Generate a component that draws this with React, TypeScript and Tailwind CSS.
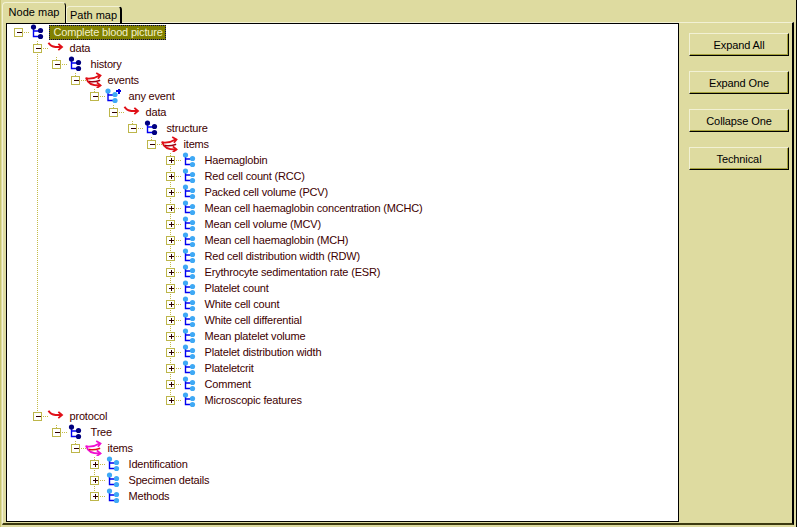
import React from 'react';

type Kind = 'structure' | 'structureLight' | 'event' | 'single' | 'multiple' | 'multiplePink';

type TreeNode = {
  label: string;
  kind: Kind;
  open?: boolean;
  selected?: boolean;
  children?: TreeNode[];
};

const leaf = (label: string): TreeNode => ({ label, kind: 'structureLight' });

const tree: TreeNode = {
  label: 'Complete blood picture',
  kind: 'structure',
  open: true,
  selected: true,
  children: [
    {
      label: 'data',
      kind: 'single',
      open: true,
      children: [
        {
          label: 'history',
          kind: 'structure',
          open: true,
          children: [
            {
              label: 'events',
              kind: 'multiple',
              open: true,
              children: [
                {
                  label: 'any event',
                  kind: 'event',
                  open: true,
                  children: [
                    {
                      label: 'data',
                      kind: 'single',
                      open: true,
                      children: [
                        {
                          label: 'structure',
                          kind: 'structure',
                          open: true,
                          children: [
                            {
                              label: 'items',
                              kind: 'multiple',
                              open: true,
                              children: [
                                leaf('Haemaglobin'),
                                leaf('Red cell count (RCC)'),
                                leaf('Packed cell volume (PCV)'),
                                leaf('Mean cell haemaglobin concentration (MCHC)'),
                                leaf('Mean cell volume (MCV)'),
                                leaf('Mean cell haemaglobin (MCH)'),
                                leaf('Red cell distribution width (RDW)'),
                                leaf('Erythrocyte sedimentation rate (ESR)'),
                                leaf('Platelet count'),
                                leaf('White cell count'),
                                leaf('White cell differential'),
                                leaf('Mean platelet volume'),
                                leaf('Platelet distribution width'),
                                leaf('Plateletcrit'),
                                leaf('Comment'),
                                leaf('Microscopic features'),
                              ],
                            },
                          ],
                        },
                      ],
                    },
                  ],
                },
              ],
            },
          ],
        },
      ],
    },
    {
      label: 'protocol',
      kind: 'single',
      open: true,
      children: [
        {
          label: 'Tree',
          kind: 'structure',
          open: true,
          children: [
            {
              label: 'items',
              kind: 'multiplePink',
              open: true,
              children: [leaf('Identification'), leaf('Specimen details'), leaf('Methods')],
            },
          ],
        },
      ],
    },
  ],
};

type Row = { node: TreeNode; depth: number; guides: number[]; first: boolean; hasNext: boolean };

function flatten(node: TreeNode, depth: number, guides: number[], first: boolean, hasNext: boolean, out: Row[]) {
  out.push({ node, depth, guides, first, hasNext });
  const kids = node.children ?? [];
  const next = hasNext ? [...guides, depth] : guides;
  kids.forEach((kid, i) => flatten(kid, depth + 1, next, i === 0, i < kids.length - 1, out));
}

const rows: Row[] = [];
flatten(tree, 0, [], true, false, rows);

const toggleX = (depth: number) => 11.5 + depth * 19;
const DOT = '#c4bc48';

function StructureIcon({ dot, plus }: { dot: string; plus?: boolean }) {
  return (
    <g transform={plus ? 'translate(-1.5 0)' : undefined}>
      <path d="M15 -4V4.5H21M15 -1H21" fill="none" stroke="#0000f0" strokeWidth="1.4" />
      <circle cx="15" cy="-5" r="2.6" fill={dot} />
      <circle cx="22" cy="-1.5" r="2.6" fill={dot} />
      <circle cx="22" cy="4.5" r="2.6" fill={dot} />
      {plus && <path d="M25.5 -7.5V-2.5M23 -5H28" stroke="#0000e0" strokeWidth="2" shapeRendering="crispEdges" />}
    </g>
  );
}

function SingleArrow() {
  return (
    <g fill="none" strokeLinecap="square">
      <path d="M11.5 -4.5C13 -2 15 -1.5 18 -1H23.5" stroke="#e01018" strokeWidth="2" />
      <path d="M21.5 -3.5L24.5 -1L21.5 1.5" stroke="#e01018" strokeWidth="1.8" />
    </g>
  );
}

function MultipleArrow({ main, accent }: { main: string; accent: string }) {
  return (
    <g fill="none" strokeLinecap="square">
      <path d="M11 -1.5C15 -1 20 -2 24 -4.5" stroke={main} strokeWidth="1.8" />
      <path d="M21.5 -6.5L25 -4.5L23 -2" stroke={main} strokeWidth="1.8" />
      <path d="M11 -1.5C12 3 17 5.5 24 5.5" stroke={main} strokeWidth="1.8" />
      <path d="M22 3L25 5.5L22 7.5" stroke={main} strokeWidth="1.8" />
      <path d="M14 1.5C17 2 21 1.5 24 0.5" stroke={accent} strokeWidth="1.4" />
    </g>
  );
}

function NodeIcon({ node }: { node: TreeNode }) {
  switch (node.kind) {
    case 'structure':
      return <StructureIcon dot="#000080" />;
    case 'structureLight':
      return <StructureIcon dot="#3fa9f5" />;
    case 'event':
      return <StructureIcon dot="#3fa9f5" plus />;
    case 'single':
      return <SingleArrow />;
    case 'multiple':
      return <MultipleArrow main="#e01018" accent="#a00010" />;
    case 'multiplePink':
      return <MultipleArrow main="#f010d0" accent="#e01018" />;
  }
}

function TreeRow({ row }: { row: Row }) {
  const { node, depth, guides, first, hasNext } = row;
  const tx = toggleX(depth);
  const arrow = node.kind === 'single' || node.kind === 'multiple' || node.kind === 'multiplePink';
  const width = tx + (arrow ? 32 : 34);

  return (
    <div className="flex h-4 items-center">
      <svg width={width} height={16} className="shrink-0">
        <g stroke={DOT} strokeDasharray="1 1" shapeRendering="crispEdges">
          {guides.map((g) => (
            <line key={g} x1={toggleX(g)} x2={toggleX(g)} y1={0} y2={16} />
          ))}
          {depth > 0 && first && <line x1={tx} x2={tx} y1={-1} y2={4} />}
          {depth > 0 && !first && <line x1={tx} x2={tx} y1={0} y2={4} />}
          {hasNext && <line x1={tx} x2={tx} y1={12} y2={16} />}
          <line x1={tx + 5} x2={tx + 10} y1={8.5} y2={8.5} />
        </g>
        <rect x={tx - 4} y={4.5} width={8} height={8} fill="#fff" stroke="#bdb64a" strokeWidth="1" shapeRendering="crispEdges" />
        <path
          d={node.open ? `M${tx - 2} 8.5H${tx + 3}` : `M${tx - 2} 8.5H${tx + 3}M${tx + 0.5} 6V11`}
          stroke="#300000"
          shapeRendering="crispEdges"
        />
        <g transform={`translate(${tx} 8)`}>
          <NodeIcon node={node} />
        </g>
      </svg>
      {node.selected ? (
        <span className="ml-[-4px] flex h-[15px] items-center border border-dotted border-[#000050] bg-[#808000] pr-[2px] pl-[4px] text-[#f2f0c8]">
          {node.label}
        </span>
      ) : (
        <span className="text-[#400000]">{node.label}</span>
      )}
    </div>
  );
}

function SideButton({ label }: { label: string }) {
  return (
    <button className="h-[23px] w-[100px] border-t border-r border-b border-l border-t-[#f2f1d4] border-r-black border-b-black border-l-[#f2f1d4] bg-[#dedba0] pt-px tracking-[-0.1px] text-black shadow-[inset_-1px_-1px_0_#a5a13c]">
      {label}
    </button>
  );
}

export default function App() {
  return (
    <div className="h-[527px] w-[797px] overflow-hidden border-r border-l border-r-black border-l-[#c8c470] bg-[#dedba0] pt-[2px] font-['Liberation_Sans',Arial,sans-serif] text-[11px] leading-none tracking-[-0.18px]">
      <div className="relative z-10 -mb-px flex h-[21px] items-end pl-px">
        <div className="flex h-[21px] w-[64px] items-center justify-center rounded-t-sm border-t border-r border-l border-t-[#f2f1d4] border-r-black border-l-[#f2f1d4] bg-[#dedba0] pb-px tracking-normal text-black">
          Node map
        </div>
        <div className="flex h-[17px] w-[56px] items-center justify-center rounded-t-sm border-t border-r-2 border-l border-t-[#f2f1d4] border-r-black border-l-[#f2f1d4] tracking-normal text-black">
          Path map
        </div>
      </div>
      <div className="ml-px flex h-[503px] w-[792px] border-t border-r-2 border-b-2 border-l border-t-[#f2f1d4] border-r-black border-b-[#3c3a10] border-l-[#f2f1d4] pl-[3px]">
        <div className="h-[499px] w-[673px] overflow-hidden border border-black bg-white">
          {rows.map((row, i) => (
            <TreeRow key={i} row={row} />
          ))}
        </div>
        <div className="ml-[10px] flex flex-col gap-[15px] pt-[10px]">
          <SideButton label="Expand All" />
          <SideButton label="Expand One" />
          <SideButton label="Collapse One" />
          <SideButton label="Technical" />
        </div>
      </div>
    </div>
  );
}
